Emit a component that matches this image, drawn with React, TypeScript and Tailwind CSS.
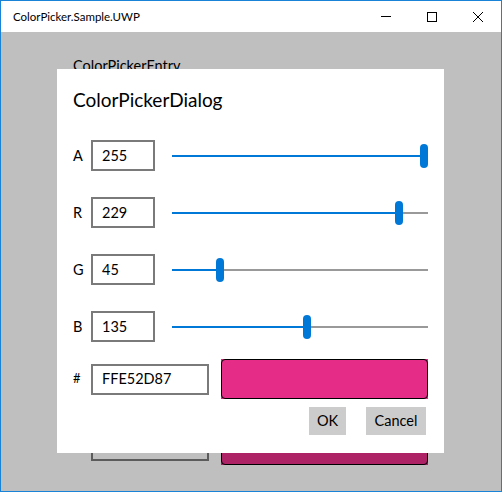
const channels = [
  { label: "A", value: 255 },
  { label: "R", value: 229 },
  { label: "G", value: 45 },
  { label: "B", value: 135 },
];

const font = { fontFamily: 'Lato, "Noto Sans", sans-serif' };

function Slider({ value }: { value: number }) {
  // track is 256 wide, thumb 8 wide
  const left = Math.round((value / 255) * 248);
  return (
    <div className="relative w-[256px] h-[24px] ml-[17px] flex items-center">
      <div className="w-full h-[2px] bg-[#999999]" />
      <div
        className="absolute left-0 top-[11px] h-[2px] bg-[#0078d7]"
        style={{ width: left + 4 }}
      />
      <div
        className="absolute top-0 w-[8px] h-[24px] rounded-[4px] bg-[#0078d7]"
        style={{ left }}
      />
    </div>
  );
}

export default function App() {
  return (
    <div
      className="w-[502px] h-[492px] border border-[#1883d7] flex flex-col bg-white text-black"
      style={font}
    >
      <div className="h-[31px] flex items-center bg-white">
        <span className="pl-[12px] text-[11.5px] flex-1">ColorPicker.Sample.UWP</span>
        <div className="flex h-full">
          <div className="w-[46px] h-full flex items-center justify-center">
            <div className="w-[10px] h-[1px] bg-black" />
          </div>
          <div className="w-[46px] h-full flex items-center justify-center">
            <div className="w-[10px] h-[10px] border border-black" />
          </div>
          <div className="w-[46px] h-full flex items-center justify-center">
            <svg width="10" height="10" viewBox="0 0 10 10">
              <path d="M0 0L10 10M10 0L0 10" stroke="black" strokeWidth="1" />
            </svg>
          </div>
        </div>
      </div>

      <div className="relative flex-1 bg-[#bfbfbf] overflow-hidden">
        {/* page behind the dialog */}
        <div className="pt-[24px] pl-[72px]">
          <div className="text-[14.5px] leading-[20px]">ColorPickerEntry</div>
          <div className="mt-[349px] flex items-center pl-[18px]">
            <div className="w-[118px] h-[31px] border-2 border-[#5b5b5b]" />
            <div className="ml-[12px] w-[207px] h-[40px] bg-[#ac2265]">
              <div className="w-full h-full border border-black rounded-[4px]" />
            </div>
          </div>
        </div>

        {/* dialog */}
        <div className="absolute left-[56px] top-[37px] w-[387px] h-[384px] bg-white px-[16px] pt-[17px] pb-[18px] flex flex-col">
          <div className="text-[19px] leading-[28px]">ColorPickerDialog</div>
          <div className="mt-[26px] flex flex-col gap-[26px]">
            {channels.map((c) => (
              <div key={c.label} className="flex items-center h-[31px]">
                <span className="w-[18px] text-[14.5px]">{c.label}</span>
                <div className="w-[64px] h-[31px] border-2 border-[#7a7a7a] flex items-center pl-[9px] text-[14.5px]">
                  {c.value}
                </div>
                <Slider value={c.value} />
              </div>
            ))}
          </div>
          <div className="mt-[17px] flex items-center h-[40px]">
            <span className="w-[18px] text-[13px]">#</span>
            <div className="w-[118px] h-[31px] border-2 border-[#7a7a7a] flex items-center pl-[9px] text-[14.5px]">
              FFE52D87
            </div>
            <div className="ml-[12px] w-[207px] h-[40px] bg-[#e52d87]">
              <div className="w-full h-full border border-black rounded-[4px]" />
            </div>
          </div>
          <div className="mt-[8px] flex justify-end gap-[20px] pr-[2px]">
            <button className="w-[37px] h-[28px] bg-[#cccccc] text-[14.5px] flex items-center justify-center">
              OK
            </button>
            <button className="w-[60px] h-[28px] bg-[#cccccc] text-[14.5px] flex items-center justify-center">
              Cancel
            </button>
          </div>
        </div>
      </div>
    </div>
  );
}
